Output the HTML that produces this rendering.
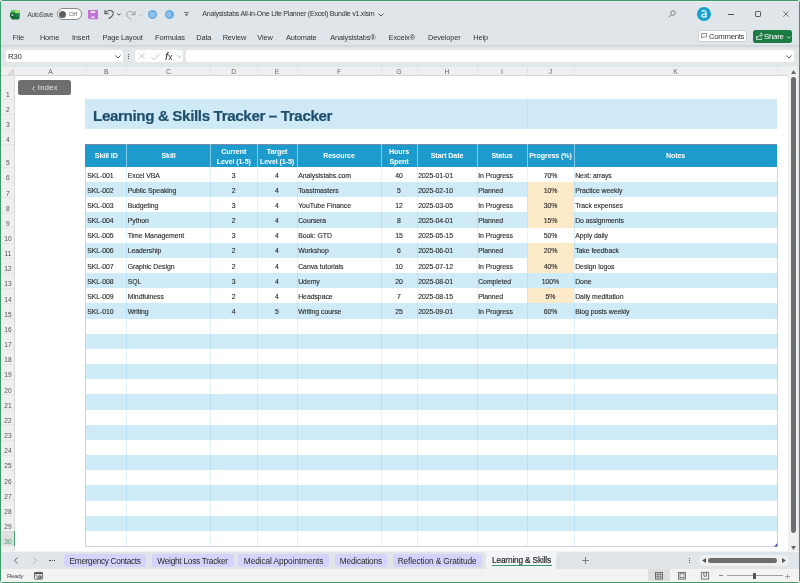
<!DOCTYPE html><html><head><meta charset="utf-8"><style>
*{margin:0;padding:0;box-sizing:border-box}
html,body{width:800px;height:583px;overflow:hidden;background:#e6e6e6}
body{will-change:transform;font-family:"Liberation Sans", sans-serif;position:relative;color:#262626}
.a{position:absolute;white-space:nowrap}
.t{position:absolute;white-space:nowrap;line-height:1}
svg{position:absolute;overflow:visible}
</style></head><body>

<div class="a" style="left:0;top:0;width:800px;height:583px;background:#dfe5e8;border:1.2px solid #3d9a6a;border-radius:3px"></div>
<div class="a" style="left:1.2px;top:1.2px;width:797.6px;height:1px;background:#eaeef1"></div>
<svg style="left:9.5px;top:9.6px" width="9.5" height="9.5" viewBox="0 0 10 10">
<path d="M2.2 0 H8.8 Q10 0 10 1.2 V8.8 Q10 10 8.8 10 H2.2 Q1.2 10 1.2 8.8 V1.2 Q1.2 0 2.2 0 Z" fill="#17733c"/>
<path d="M2.2 0 H8.8 Q10 0 10 1.2 V3.4 H1.2 V1.2 Q1.2 0 2.2 0 Z" fill="#5fcf5a"/>
<rect x="5.6" y="0" width="4.4" height="3.4" rx="0.6" fill="#a6e37c"/>
<rect x="5.6" y="3.4" width="4.4" height="3.3" fill="#22874a"/>
<rect x="0" y="2.6" width="5.2" height="5.2" rx="0.7" fill="#0f5e2e"/>
<path d="M1.6 3.9 L3.6 6.5 M3.6 3.9 L1.6 6.5" stroke="#fff" stroke-width="0.75"/>
</svg>
<div class="t" style="left:27.6px;top:11.8px;font-size:6.5px;color:#4a4a4a;text-align:left;font-weight:normal;letter-spacing:-0.35px">AutoSave</div>
<div class="a" style="left:56.5px;top:8.3px;width:25px;height:12px;background:#fff;border:0.8px solid #8a8a8a;border-radius:6px"></div>
<div class="a" style="left:58.8px;top:10.6px;width:7.4px;height:7.4px;border-radius:50%;background:#5f5f5f"></div>
<div class="t" style="left:69px;top:11.4px;font-size:6.2px;color:#666;text-align:left;font-weight:normal;">Off</div>
<svg style="left:88px;top:9.6px" width="10" height="9.2" viewBox="0 0 10 9.2">
<path d="M0.8 0 H9.2 Q10 0 10 0.8 V8.4 Q10 9.2 9.2 9.2 H1.2 L0 8 V0.8 Q0 0 0.8 0 Z" fill="#c172d3"/>
<rect x="2.6" y="1.2" width="4.6" height="1.8" rx="0.4" fill="#fbf2fc"/>
<rect x="3.2" y="6.6" width="3.4" height="1.6" rx="0.4" fill="#f4e4f7"/>
</svg>
<svg style="left:104px;top:9px" width="10" height="10" viewBox="0 0 10 10">
<path d="M1 1 L1 4.8 L4.8 4.8" fill="none" stroke="#555" stroke-width="1.1"/>
<path d="M1.3 4.5 C2.8 1.2 8 0.2 9.2 3.6 C9.9 5.8 7 8.2 4.6 9.8" fill="none" stroke="#555" stroke-width="1.05"/>
</svg>
<svg style="left:116.5px;top:13.2px" width="4" height="3" viewBox="0 0 4 3"><path d="M0.3 0.5 L2 2.2 L3.7 0.5" fill="none" stroke="#444" stroke-width="0.9"/></svg>
<svg style="left:126px;top:9.5px" width="10" height="10" viewBox="0 0 10 10">
<path d="M9 1 L9 4.8 L5.2 4.8" fill="none" stroke="#9a9a9a" stroke-width="1.0"/>
<path d="M8.7 4.5 C7.2 1.2 2 0.2 0.8 3.6 C0.1 5.8 3 8.2 5.4 9.8" fill="none" stroke="#9a9a9a" stroke-width="0.95"/>
</svg>
<svg style="left:138.5px;top:13.5px" width="4" height="3" viewBox="0 0 4 3"><path d="M0.3 0.5 L2 2.2 L3.7 0.5" fill="none" stroke="#bbb" stroke-width="0.8"/></svg>
<div class="a" style="left:148.0px;top:9.9px;width:9px;height:9px;border-radius:50%;background:#6aaee6"></div>
<div class="a" style="left:150.1px;top:12px;width:4.8px;height:4.8px;border-radius:1.2px;background:#8fc2ee"></div>
<div class="a" style="left:164.5px;top:9.9px;width:9px;height:9px;border-radius:50%;background:#6aaee6"></div>
<div class="a" style="left:166.6px;top:12px;width:4.8px;height:4.8px;border-radius:1.2px;background:#8fc2ee"></div>
<svg style="left:183.5px;top:11.8px" width="5" height="5" viewBox="0 0 5 5"><path d="M0.3 0.6 H4.7" stroke="#444" stroke-width="0.8"/><path d="M0.8 2.2 L2.5 4 L4.2 2.2 Z" fill="#444"/></svg>
<div class="t" style="left:202.3px;top:11.0px;font-size:7.1px;color:#333;text-align:left;font-weight:normal;letter-spacing:-0.25px">Analysistabs All-in-One Life Planner (Excel) Bundle v1.xlsm</div>
<svg style="left:377.5px;top:12.8px" width="6" height="4" viewBox="0 0 6 4"><path d="M0.5 0.6 L3 3 L5.5 0.6" fill="none" stroke="#444" stroke-width="0.9"/></svg>
<svg style="left:667.5px;top:10px" width="8" height="8" viewBox="0 0 8 8"><circle cx="5" cy="3" r="2.3" fill="none" stroke="#666" stroke-width="0.75"/><path d="M3.3 4.7 L0.8 7.2" stroke="#666" stroke-width="0.85"/></svg>
<div class="a" style="left:697px;top:7px;width:14.2px;height:14.2px;border-radius:50%;background:#18a0cf"></div>
<svg style="left:697px;top:7px" width="14.2" height="14.2" viewBox="0 0 14 14"><path d="M4.6 4.4 C5.6 3.3 8.6 3.3 8.9 5.2 L8.9 10.3 M8.9 6.9 C6.5 6.6 4.5 7.2 4.6 8.7 C4.7 10.4 7.6 10.3 8.9 8.8" fill="none" stroke="#fff" stroke-width="1.2"/></svg>
<div class="a" style="left:728px;top:13.7px;width:6px;height:0.75px;background:#555;"></div>
<div class="a" style="left:755.2px;top:11px;width:6px;height:6px;background:transparent;border:0.75px solid #555;border-radius:1.2px"></div>
<svg style="left:782.5px;top:11px" width="6" height="6" viewBox="0 0 6 6"><path d="M0.3 0.3 L5.7 5.7 M5.7 0.3 L0.3 5.7" stroke="#555" stroke-width="0.75"/></svg>
<div class="t" style="left:9.5px;top:33.8px;width:17.5px;font-size:7.4px;color:#333;text-align:center;font-weight:normal;letter-spacing:-0.12px">File</div>
<div class="t" style="left:36.7px;top:33.8px;width:25.699999999999996px;font-size:7.4px;color:#333;text-align:center;font-weight:normal;letter-spacing:-0.12px">Home</div>
<div class="t" style="left:68.9px;top:33.8px;width:23.799999999999997px;font-size:7.4px;color:#333;text-align:center;font-weight:normal;letter-spacing:-0.12px">Insert</div>
<div class="t" style="left:99.5px;top:33.8px;width:46.0px;font-size:7.4px;color:#333;text-align:center;font-weight:normal;letter-spacing:-0.12px">Page Layout</div>
<div class="t" style="left:151.7px;top:33.8px;width:36.60000000000002px;font-size:7.4px;color:#333;text-align:center;font-weight:normal;letter-spacing:-0.12px">Formulas</div>
<div class="t" style="left:193px;top:33.8px;width:21.599999999999994px;font-size:7.4px;color:#333;text-align:center;font-weight:normal;letter-spacing:-0.12px">Data</div>
<div class="t" style="left:219.8px;top:33.8px;width:29.19999999999999px;font-size:7.4px;color:#333;text-align:center;font-weight:normal;letter-spacing:-0.12px">Review</div>
<div class="t" style="left:253.89999999999998px;top:33.8px;width:22.200000000000045px;font-size:7.4px;color:#333;text-align:center;font-weight:normal;letter-spacing:-0.12px">View</div>
<div class="t" style="left:281.5px;top:33.8px;width:39.5px;font-size:7.4px;color:#333;text-align:center;font-weight:normal;letter-spacing:-0.12px">Automate</div>
<div class="t" style="left:326.4px;top:33.8px;width:53.10000000000002px;font-size:7.4px;color:#333;text-align:center;font-weight:normal;letter-spacing:-0.12px">Analysistabs®</div>
<div class="t" style="left:385.8px;top:33.8px;width:32.0px;font-size:7.4px;color:#333;text-align:center;font-weight:normal;letter-spacing:-0.12px">Excelx®</div>
<div class="t" style="left:423.9px;top:33.8px;width:40.700000000000045px;font-size:7.4px;color:#333;text-align:center;font-weight:normal;letter-spacing:-0.12px">Developer</div>
<div class="t" style="left:469.7px;top:33.8px;width:21.900000000000034px;font-size:7.4px;color:#333;text-align:center;font-weight:normal;letter-spacing:-0.12px">Help</div>
<div class="a" style="left:697.7px;top:30.2px;width:49.8px;height:12px;background:#fff;border:0.6px solid #d0d0d0;border-radius:2px"></div>
<svg style="left:700.5px;top:33.3px" width="6" height="6" viewBox="0 0 7 7"><path d="M0.5 0.5 H6.5 V4.6 H2.6 L1 6.3 V4.6 H0.5 Z" fill="none" stroke="#444" stroke-width="0.7"/></svg>
<div class="t" style="left:709px;top:33.4px;font-size:7.8px;color:#333;text-align:left;font-weight:normal;letter-spacing:-0.33px">Comments</div>
<div class="a" style="left:752.7px;top:29.8px;width:39.4px;height:13.2px;background:#1b7b43;border-radius:2.5px"></div>
<svg style="left:755.5px;top:33px" width="7" height="7" viewBox="0 0 8 8"><path d="M0.6 3.4 V7.4 H6.4 V5.4 M1.6 6 C2 3.8 3.6 2.6 5.6 2.6 V4.2 L7.6 2 L5.6 -0.2 V1.4" fill="none" stroke="#fff" stroke-width="0.8"/></svg>
<div class="t" style="left:764px;top:33.2px;font-size:7.8px;color:#fff;text-align:left;font-weight:normal;letter-spacing:-0.22px">Share</div>
<svg style="left:786.5px;top:35.5px" width="4" height="3" viewBox="0 0 4 3"><path d="M0.3 0.5 L2 2.2 L3.7 0.5" fill="none" stroke="#fff" stroke-width="0.7"/></svg>
<div class="a" style="left:1.2px;top:45.3px;width:797.6px;height:21.2px;background:#e2e7ea;"></div>
<div class="a" style="left:1.2px;top:44.6px;width:797.6px;height:3px;background:linear-gradient(#cbd1d5,#d3d8dc 40%,#e2e7ea);"></div>
<div class="a" style="left:6px;top:49.8px;width:116.5px;height:12.6px;background:#fff;border-radius:2.5px"></div>
<div class="t" style="left:8px;top:52.6px;font-size:7.9px;color:#333;text-align:left;font-weight:normal;letter-spacing:-0.35px">R30</div>
<svg style="left:114.5px;top:55px" width="6" height="4" viewBox="0 0 6 4"><path d="M0.4 0.5 L3 3 L5.6 0.5" fill="none" stroke="#444" stroke-width="0.9"/></svg>
<div class="a" style="left:128.3px;top:53.7px;width:1.1px;height:1.1px;background:#555;"></div>
<div class="a" style="left:128.3px;top:56px;width:1.1px;height:1.1px;background:#555;"></div>
<div class="a" style="left:128.3px;top:58.3px;width:1.1px;height:1.1px;background:#555;"></div>
<div class="a" style="left:135px;top:49.8px;width:47.5px;height:12.6px;background:#fff;border-radius:2.5px"></div>
<svg style="left:139px;top:53px" width="6" height="6" viewBox="0 0 6 6"><path d="M0.3 0.3 L5.7 5.7 M5.7 0.3 L0.3 5.7" stroke="#aaa" stroke-width="0.6"/></svg>
<svg style="left:151px;top:53.5px" width="9" height="6" viewBox="0 0 9 6"><path d="M0.3 3.2 L3 5.7 L8.7 0.3" fill="none" stroke="#aaa" stroke-width="0.6"/></svg>
<div class="t" style="left:165px;top:50.6px;font-size:11.5px;color:#333;text-align:left;font-weight:normal;font-family:"Liberation Serif",serif;font-style:italic;letter-spacing:-0.6px"><i>f</i><span style="font-size:8.5px">x</span></div>
<svg style="left:176.5px;top:55.2px" width="5" height="3" viewBox="0 0 5 3"><path d="M0.3 0.4 L2.5 2.6 L4.7 0.4" fill="none" stroke="#999" stroke-width="0.6"/></svg>
<div class="a" style="left:186px;top:49.8px;width:608px;height:12.6px;background:#fff;border-radius:2.5px"></div>
<svg style="left:786px;top:54.5px" width="6" height="4" viewBox="0 0 6 4"><path d="M0.4 0.5 L3 3 L5.6 0.5" fill="none" stroke="#444" stroke-width="0.8"/></svg>
<div class="a" style="left:1.2px;top:66.8px;width:787px;height:9.2px;background:#efefef;border-bottom:0.8px solid #d9d9d9"></div>
<svg style="left:7px;top:68px" width="7" height="7" viewBox="0 0 7 7"><path d="M7 0 L7 7 L0 7 Z" fill="#d8d8d8"/></svg>
<div class="t" style="left:15px;top:69.0px;width:71px;font-size:6.8px;color:#666;text-align:center;font-weight:normal;">A</div>
<div class="a" style="left:85.6px;top:67.5px;width:0.8px;height:8px;background:#e2e2e2;"></div>
<div class="t" style="left:86px;top:69.0px;width:40.5px;font-size:6.8px;color:#666;text-align:center;font-weight:normal;">B</div>
<div class="a" style="left:126.1px;top:67.5px;width:0.8px;height:8px;background:#e2e2e2;"></div>
<div class="t" style="left:126.5px;top:69.0px;width:84.0px;font-size:6.8px;color:#666;text-align:center;font-weight:normal;">C</div>
<div class="a" style="left:210.1px;top:67.5px;width:0.8px;height:8px;background:#e2e2e2;"></div>
<div class="t" style="left:210.5px;top:69.0px;width:46.5px;font-size:6.8px;color:#666;text-align:center;font-weight:normal;">D</div>
<div class="a" style="left:256.6px;top:67.5px;width:0.8px;height:8px;background:#e2e2e2;"></div>
<div class="t" style="left:257px;top:69.0px;width:40px;font-size:6.8px;color:#666;text-align:center;font-weight:normal;">E</div>
<div class="a" style="left:296.6px;top:67.5px;width:0.8px;height:8px;background:#e2e2e2;"></div>
<div class="t" style="left:297px;top:69.0px;width:84px;font-size:6.8px;color:#666;text-align:center;font-weight:normal;">F</div>
<div class="a" style="left:380.6px;top:67.5px;width:0.8px;height:8px;background:#e2e2e2;"></div>
<div class="t" style="left:381px;top:69.0px;width:36px;font-size:6.8px;color:#666;text-align:center;font-weight:normal;">G</div>
<div class="a" style="left:416.6px;top:67.5px;width:0.8px;height:8px;background:#e2e2e2;"></div>
<div class="t" style="left:417px;top:69.0px;width:60px;font-size:6.8px;color:#666;text-align:center;font-weight:normal;">H</div>
<div class="a" style="left:476.6px;top:67.5px;width:0.8px;height:8px;background:#e2e2e2;"></div>
<div class="t" style="left:477px;top:69.0px;width:50px;font-size:6.8px;color:#666;text-align:center;font-weight:normal;">I</div>
<div class="a" style="left:526.6px;top:67.5px;width:0.8px;height:8px;background:#e2e2e2;"></div>
<div class="t" style="left:527px;top:69.0px;width:47px;font-size:6.8px;color:#666;text-align:center;font-weight:normal;">J</div>
<div class="a" style="left:573.6px;top:67.5px;width:0.8px;height:8px;background:#e2e2e2;"></div>
<div class="t" style="left:574px;top:69.0px;width:203px;font-size:6.8px;color:#666;text-align:center;font-weight:normal;">K</div>
<div class="a" style="left:776.6px;top:67.5px;width:0.8px;height:8px;background:#e2e2e2;"></div>
<div class="a" style="left:15px;top:76px;width:773px;height:475.5px;background:#fff;"></div>
<div class="a" style="left:1.2px;top:76px;width:13.8px;height:475.5px;background:#efefef;border-right:0.8px solid #d9d9d9"></div>
<div class="t" style="left:1.2px;top:92.2px;width:13.5px;font-size:6.6px;color:#555;text-align:center;font-weight:normal;">1</div>
<div class="a" style="left:1.2px;top:98.7px;width:13px;height:0.6px;background:#e6e6e6;"></div>
<div class="t" style="left:1.2px;top:107.2px;width:13.5px;font-size:6.6px;color:#555;text-align:center;font-weight:normal;">2</div>
<div class="a" style="left:1.2px;top:113.7px;width:13px;height:0.6px;background:#e6e6e6;"></div>
<div class="t" style="left:1.2px;top:122.2px;width:13.5px;font-size:6.6px;color:#555;text-align:center;font-weight:normal;">3</div>
<div class="a" style="left:1.2px;top:128.7px;width:13px;height:0.6px;background:#e6e6e6;"></div>
<div class="t" style="left:1.2px;top:137.2px;width:13.5px;font-size:6.6px;color:#555;text-align:center;font-weight:normal;">4</div>
<div class="a" style="left:1.2px;top:143.7px;width:13px;height:0.6px;background:#e6e6e6;"></div>
<div class="t" style="left:1.2px;top:160.2px;width:13.5px;font-size:6.6px;color:#555;text-align:center;font-weight:normal;">5</div>
<div class="a" style="left:1.2px;top:166.7px;width:13px;height:0.6px;background:#e6e6e6;"></div>
<div class="t" style="left:1.2px;top:175.35999999999999px;width:13.5px;font-size:6.6px;color:#555;text-align:center;font-weight:normal;">6</div>
<div class="a" style="left:1.2px;top:181.85999999999999px;width:13px;height:0.6px;background:#e6e6e6;"></div>
<div class="t" style="left:1.2px;top:190.51999999999998px;width:13.5px;font-size:6.6px;color:#555;text-align:center;font-weight:normal;">7</div>
<div class="a" style="left:1.2px;top:197.01999999999998px;width:13px;height:0.6px;background:#e6e6e6;"></div>
<div class="t" style="left:1.2px;top:205.67999999999998px;width:13.5px;font-size:6.6px;color:#555;text-align:center;font-weight:normal;">8</div>
<div class="a" style="left:1.2px;top:212.17999999999998px;width:13px;height:0.6px;background:#e6e6e6;"></div>
<div class="t" style="left:1.2px;top:220.83999999999997px;width:13.5px;font-size:6.6px;color:#555;text-align:center;font-weight:normal;">9</div>
<div class="a" style="left:1.2px;top:227.33999999999997px;width:13px;height:0.6px;background:#e6e6e6;"></div>
<div class="t" style="left:1.2px;top:236.0px;width:13.5px;font-size:6.6px;color:#555;text-align:center;font-weight:normal;">10</div>
<div class="a" style="left:1.2px;top:242.5px;width:13px;height:0.6px;background:#e6e6e6;"></div>
<div class="t" style="left:1.2px;top:251.15999999999997px;width:13.5px;font-size:6.6px;color:#555;text-align:center;font-weight:normal;">11</div>
<div class="a" style="left:1.2px;top:257.65999999999997px;width:13px;height:0.6px;background:#e6e6e6;"></div>
<div class="t" style="left:1.2px;top:266.32px;width:13.5px;font-size:6.6px;color:#555;text-align:center;font-weight:normal;">12</div>
<div class="a" style="left:1.2px;top:272.82px;width:13px;height:0.6px;background:#e6e6e6;"></div>
<div class="t" style="left:1.2px;top:281.47999999999996px;width:13.5px;font-size:6.6px;color:#555;text-align:center;font-weight:normal;">13</div>
<div class="a" style="left:1.2px;top:287.97999999999996px;width:13px;height:0.6px;background:#e6e6e6;"></div>
<div class="t" style="left:1.2px;top:296.64px;width:13.5px;font-size:6.6px;color:#555;text-align:center;font-weight:normal;">14</div>
<div class="a" style="left:1.2px;top:303.14px;width:13px;height:0.6px;background:#e6e6e6;"></div>
<div class="t" style="left:1.2px;top:311.8px;width:13.5px;font-size:6.6px;color:#555;text-align:center;font-weight:normal;">15</div>
<div class="a" style="left:1.2px;top:318.3px;width:13px;height:0.6px;background:#e6e6e6;"></div>
<div class="t" style="left:1.2px;top:326.96px;width:13.5px;font-size:6.6px;color:#555;text-align:center;font-weight:normal;">16</div>
<div class="a" style="left:1.2px;top:333.46px;width:13px;height:0.6px;background:#e6e6e6;"></div>
<div class="t" style="left:1.2px;top:342.12px;width:13.5px;font-size:6.6px;color:#555;text-align:center;font-weight:normal;">17</div>
<div class="a" style="left:1.2px;top:348.62px;width:13px;height:0.6px;background:#e6e6e6;"></div>
<div class="t" style="left:1.2px;top:357.28px;width:13.5px;font-size:6.6px;color:#555;text-align:center;font-weight:normal;">18</div>
<div class="a" style="left:1.2px;top:363.78px;width:13px;height:0.6px;background:#e6e6e6;"></div>
<div class="t" style="left:1.2px;top:372.44px;width:13.5px;font-size:6.6px;color:#555;text-align:center;font-weight:normal;">19</div>
<div class="a" style="left:1.2px;top:378.94px;width:13px;height:0.6px;background:#e6e6e6;"></div>
<div class="t" style="left:1.2px;top:387.59999999999997px;width:13.5px;font-size:6.6px;color:#555;text-align:center;font-weight:normal;">20</div>
<div class="a" style="left:1.2px;top:394.09999999999997px;width:13px;height:0.6px;background:#e6e6e6;"></div>
<div class="t" style="left:1.2px;top:402.76px;width:13.5px;font-size:6.6px;color:#555;text-align:center;font-weight:normal;">21</div>
<div class="a" style="left:1.2px;top:409.26px;width:13px;height:0.6px;background:#e6e6e6;"></div>
<div class="t" style="left:1.2px;top:417.92px;width:13.5px;font-size:6.6px;color:#555;text-align:center;font-weight:normal;">22</div>
<div class="a" style="left:1.2px;top:424.42px;width:13px;height:0.6px;background:#e6e6e6;"></div>
<div class="t" style="left:1.2px;top:433.08px;width:13.5px;font-size:6.6px;color:#555;text-align:center;font-weight:normal;">23</div>
<div class="a" style="left:1.2px;top:439.58px;width:13px;height:0.6px;background:#e6e6e6;"></div>
<div class="t" style="left:1.2px;top:448.24px;width:13.5px;font-size:6.6px;color:#555;text-align:center;font-weight:normal;">24</div>
<div class="a" style="left:1.2px;top:454.74px;width:13px;height:0.6px;background:#e6e6e6;"></div>
<div class="t" style="left:1.2px;top:463.4px;width:13.5px;font-size:6.6px;color:#555;text-align:center;font-weight:normal;">25</div>
<div class="a" style="left:1.2px;top:469.9px;width:13px;height:0.6px;background:#e6e6e6;"></div>
<div class="t" style="left:1.2px;top:478.56px;width:13.5px;font-size:6.6px;color:#555;text-align:center;font-weight:normal;">26</div>
<div class="a" style="left:1.2px;top:485.06px;width:13px;height:0.6px;background:#e6e6e6;"></div>
<div class="t" style="left:1.2px;top:493.71999999999997px;width:13.5px;font-size:6.6px;color:#555;text-align:center;font-weight:normal;">27</div>
<div class="a" style="left:1.2px;top:500.21999999999997px;width:13px;height:0.6px;background:#e6e6e6;"></div>
<div class="t" style="left:1.2px;top:508.87999999999994px;width:13.5px;font-size:6.6px;color:#555;text-align:center;font-weight:normal;">28</div>
<div class="a" style="left:1.2px;top:515.38px;width:13px;height:0.6px;background:#e6e6e6;"></div>
<div class="t" style="left:1.2px;top:524.0400000000001px;width:13.5px;font-size:6.6px;color:#555;text-align:center;font-weight:normal;">29</div>
<div class="a" style="left:1.2px;top:530.5400000000001px;width:13px;height:0.6px;background:#e6e6e6;"></div>
<div class="a" style="left:1.2px;top:530.84px;width:13.8px;height:15.159999999999968px;background:#dfdfdf;border-right:1.3px solid #45a06e"></div>
<div class="t" style="left:1.2px;top:539.2px;width:13.5px;font-size:6.6px;color:#3f9a68;text-align:center;font-weight:normal;">30</div>
<div class="a" style="left:18px;top:79.8px;width:53px;height:15px;background:#6e6e6e;border-radius:2.5px"></div>
<svg style="left:32px;top:85.6px" width="3" height="5" viewBox="0 0 3 5"><path d="M2.6 0.4 L0.5 2.5 L2.6 4.6" fill="none" stroke="#eee" stroke-width="0.9"/></svg>
<div class="t" style="left:37.8px;top:84.4px;font-size:7.5px;color:#ececec;text-align:left;font-weight:normal;letter-spacing:0.35px">Index</div>
<div class="a" style="left:85px;top:99px;width:692px;height:29.9px;background:#cfeaf6;"></div>
<div class="a" style="left:526.6px;top:99px;width:0.8px;height:29.9px;background:#c2e3f2;"></div>
<div class="t" style="left:93px;top:107.5px;font-size:15.2px;color:#1e4f6c;text-align:left;font-weight:bold;letter-spacing:-0.38px;-webkit-text-stroke:0.2px #1e4f6c">Learning &amp; Skills Tracker – Tracker</div>
<div class="a" style="left:85px;top:144px;width:692px;height:22.8px;background:#1e9bcd;border-top:0.6px solid #7a8aa8"></div>
<div class="t" style="left:86px;top:153.4px;width:40.5px;font-size:7.1px;color:#fff;text-align:center;font-weight:bold;line-height:7px;letter-spacing:-0.1px">Skill ID</div>
<div class="a" style="left:126.1px;top:144px;width:0.8px;height:22.8px;background:#86cbe8;"></div>
<div class="t" style="left:126.5px;top:153.4px;width:84.0px;font-size:7.1px;color:#fff;text-align:center;font-weight:bold;line-height:7px;letter-spacing:-0.1px">Skill</div>
<div class="a" style="left:210.1px;top:144px;width:0.8px;height:22.8px;background:#86cbe8;"></div>
<div class="t" style="left:210.5px;top:146.5px;width:46.5px;font-size:7.1px;color:#fff;text-align:center;font-weight:bold;line-height:10.5px;letter-spacing:-0.1px">Current<br>Level (1-5)</div>
<div class="a" style="left:256.6px;top:144px;width:0.8px;height:22.8px;background:#86cbe8;"></div>
<div class="t" style="left:257px;top:146.5px;width:40px;font-size:7.1px;color:#fff;text-align:center;font-weight:bold;line-height:10.5px;letter-spacing:-0.1px">Target<br>Level (1-5)</div>
<div class="a" style="left:296.6px;top:144px;width:0.8px;height:22.8px;background:#86cbe8;"></div>
<div class="t" style="left:297px;top:153.4px;width:84px;font-size:7.1px;color:#fff;text-align:center;font-weight:bold;line-height:7px;letter-spacing:-0.1px">Resource</div>
<div class="a" style="left:380.6px;top:144px;width:0.8px;height:22.8px;background:#86cbe8;"></div>
<div class="t" style="left:381px;top:146.5px;width:36px;font-size:7.1px;color:#fff;text-align:center;font-weight:bold;line-height:10.5px;letter-spacing:-0.1px">Hours<br>Spent</div>
<div class="a" style="left:416.6px;top:144px;width:0.8px;height:22.8px;background:#86cbe8;"></div>
<div class="t" style="left:417px;top:153.4px;width:60px;font-size:7.1px;color:#fff;text-align:center;font-weight:bold;line-height:7px;letter-spacing:-0.1px">Start Date</div>
<div class="a" style="left:476.6px;top:144px;width:0.8px;height:22.8px;background:#86cbe8;"></div>
<div class="t" style="left:477px;top:153.4px;width:50px;font-size:7.1px;color:#fff;text-align:center;font-weight:bold;line-height:7px;letter-spacing:-0.1px">Status</div>
<div class="a" style="left:526.6px;top:144px;width:0.8px;height:22.8px;background:#86cbe8;"></div>
<div class="t" style="left:527px;top:153.4px;width:47px;font-size:7.1px;color:#fff;text-align:center;font-weight:bold;line-height:7px;letter-spacing:-0.1px">Progress (%)</div>
<div class="a" style="left:573.6px;top:144px;width:0.8px;height:22.8px;background:#86cbe8;"></div>
<div class="t" style="left:574px;top:153.4px;width:203px;font-size:7.1px;color:#fff;text-align:center;font-weight:bold;line-height:7px;letter-spacing:-0.1px">Notes</div>
<div class="a" style="left:85px;top:182.16px;width:692px;height:15.159999999999997px;background:#cfebf7;"></div>
<div class="a" style="left:527px;top:182.16px;width:47px;height:15.159999999999997px;background:#fdeac8;"></div>
<div class="a" style="left:527px;top:197.32px;width:47px;height:15.159999999999997px;background:#fdeac8;"></div>
<div class="a" style="left:85px;top:212.48px;width:692px;height:15.159999999999997px;background:#cfebf7;"></div>
<div class="a" style="left:527px;top:212.48px;width:47px;height:15.159999999999997px;background:#fdeac8;"></div>
<div class="a" style="left:85px;top:242.8px;width:692px;height:15.159999999999968px;background:#cfebf7;"></div>
<div class="a" style="left:527px;top:242.8px;width:47px;height:15.159999999999968px;background:#fdeac8;"></div>
<div class="a" style="left:527px;top:257.96px;width:47px;height:15.160000000000025px;background:#fdeac8;"></div>
<div class="a" style="left:85px;top:273.12px;width:692px;height:15.159999999999968px;background:#cfebf7;"></div>
<div class="a" style="left:527px;top:288.28px;width:47px;height:15.160000000000025px;background:#fdeac8;"></div>
<div class="a" style="left:85px;top:303.44px;width:692px;height:15.160000000000025px;background:#cfebf7;"></div>
<div class="a" style="left:85px;top:333.76px;width:692px;height:15.160000000000025px;background:#cfebf7;"></div>
<div class="a" style="left:85px;top:364.08px;width:692px;height:15.160000000000025px;background:#cfebf7;"></div>
<div class="a" style="left:85px;top:394.4px;width:692px;height:15.160000000000025px;background:#cfebf7;"></div>
<div class="a" style="left:85px;top:424.72px;width:692px;height:15.159999999999968px;background:#cfebf7;"></div>
<div class="a" style="left:85px;top:455.04px;width:692px;height:15.159999999999968px;background:#cfebf7;"></div>
<div class="a" style="left:85px;top:485.36px;width:692px;height:15.159999999999968px;background:#cfebf7;"></div>
<div class="a" style="left:85px;top:515.68px;width:692px;height:15.160000000000082px;background:#cfebf7;"></div>
<div class="a" style="left:126.0px;top:167px;width:1px;height:379.0px;background:rgba(70,170,220,0.15);"></div>
<div class="a" style="left:210.0px;top:167px;width:1px;height:379.0px;background:rgba(70,170,220,0.15);"></div>
<div class="a" style="left:256.5px;top:167px;width:1px;height:379.0px;background:rgba(70,170,220,0.15);"></div>
<div class="a" style="left:296.5px;top:167px;width:1px;height:379.0px;background:rgba(70,170,220,0.15);"></div>
<div class="a" style="left:380.5px;top:167px;width:1px;height:379.0px;background:rgba(70,170,220,0.15);"></div>
<div class="a" style="left:416.5px;top:167px;width:1px;height:379.0px;background:rgba(70,170,220,0.15);"></div>
<div class="a" style="left:476.5px;top:167px;width:1px;height:379.0px;background:rgba(70,170,220,0.15);"></div>
<div class="a" style="left:526.5px;top:167px;width:1px;height:379.0px;background:rgba(70,170,220,0.15);"></div>
<div class="a" style="left:573.5px;top:167px;width:1px;height:379.0px;background:rgba(70,170,220,0.15);"></div>
<div class="a" style="left:85px;top:166.8px;width:692.6px;height:379.8px;border:0.8px solid #cdd3e2;border-top:none"></div>
<svg style="left:774px;top:543.0px" width="3.5" height="3.5" viewBox="0 0 4 4"><path d="M4 0 L4 4 L0 4 Z" fill="#3b5bbf"/></svg>
<div class="t" style="left:87.2px;top:172.6px;width:38.1px;font-size:6.9px;color:#2b2b2b;text-align:left;font-weight:normal;letter-spacing:-0.05px;-webkit-text-stroke:0.12px #2b2b2b">SKL-001</div>
<div class="t" style="left:127.7px;top:172.6px;width:81.6px;font-size:6.9px;color:#2b2b2b;text-align:left;font-weight:normal;letter-spacing:-0.05px;-webkit-text-stroke:0.12px #2b2b2b">Excel VBA</div>
<div class="t" style="left:211.7px;top:172.6px;width:44.1px;font-size:6.9px;color:#2b2b2b;text-align:center;font-weight:normal;letter-spacing:-0.05px;-webkit-text-stroke:0.12px #2b2b2b">3</div>
<div class="t" style="left:258.2px;top:172.6px;width:37.6px;font-size:6.9px;color:#2b2b2b;text-align:center;font-weight:normal;letter-spacing:-0.05px;-webkit-text-stroke:0.12px #2b2b2b">4</div>
<div class="t" style="left:298.2px;top:172.6px;width:81.6px;font-size:6.9px;color:#2b2b2b;text-align:left;font-weight:normal;letter-spacing:-0.05px;-webkit-text-stroke:0.12px #2b2b2b">Analysistabs.com</div>
<div class="t" style="left:382.2px;top:172.6px;width:33.6px;font-size:6.9px;color:#2b2b2b;text-align:center;font-weight:normal;letter-spacing:-0.05px;-webkit-text-stroke:0.12px #2b2b2b">40</div>
<div class="t" style="left:418.2px;top:172.6px;width:57.6px;font-size:6.9px;color:#2b2b2b;text-align:left;font-weight:normal;letter-spacing:-0.05px;-webkit-text-stroke:0.12px #2b2b2b">2025-01-01</div>
<div class="t" style="left:478.2px;top:172.6px;width:47.6px;font-size:6.9px;color:#2b2b2b;text-align:left;font-weight:normal;letter-spacing:-0.05px;-webkit-text-stroke:0.12px #2b2b2b">In Progress</div>
<div class="t" style="left:528.2px;top:172.6px;width:44.6px;font-size:6.9px;color:#2b2b2b;text-align:center;font-weight:normal;letter-spacing:-0.05px;-webkit-text-stroke:0.12px #2b2b2b">70%</div>
<div class="t" style="left:575.2px;top:172.6px;width:200.6px;font-size:6.9px;color:#2b2b2b;text-align:left;font-weight:normal;letter-spacing:-0.05px;-webkit-text-stroke:0.12px #2b2b2b">Next: arrays</div>
<div class="t" style="left:87.2px;top:187.76px;width:38.1px;font-size:6.9px;color:#2b2b2b;text-align:left;font-weight:normal;letter-spacing:-0.05px;-webkit-text-stroke:0.12px #2b2b2b">SKL-002</div>
<div class="t" style="left:127.7px;top:187.76px;width:81.6px;font-size:6.9px;color:#2b2b2b;text-align:left;font-weight:normal;letter-spacing:-0.05px;-webkit-text-stroke:0.12px #2b2b2b">Public Speaking</div>
<div class="t" style="left:211.7px;top:187.76px;width:44.1px;font-size:6.9px;color:#2b2b2b;text-align:center;font-weight:normal;letter-spacing:-0.05px;-webkit-text-stroke:0.12px #2b2b2b">2</div>
<div class="t" style="left:258.2px;top:187.76px;width:37.6px;font-size:6.9px;color:#2b2b2b;text-align:center;font-weight:normal;letter-spacing:-0.05px;-webkit-text-stroke:0.12px #2b2b2b">4</div>
<div class="t" style="left:298.2px;top:187.76px;width:81.6px;font-size:6.9px;color:#2b2b2b;text-align:left;font-weight:normal;letter-spacing:-0.05px;-webkit-text-stroke:0.12px #2b2b2b">Toastmasters</div>
<div class="t" style="left:382.2px;top:187.76px;width:33.6px;font-size:6.9px;color:#2b2b2b;text-align:center;font-weight:normal;letter-spacing:-0.05px;-webkit-text-stroke:0.12px #2b2b2b">5</div>
<div class="t" style="left:418.2px;top:187.76px;width:57.6px;font-size:6.9px;color:#2b2b2b;text-align:left;font-weight:normal;letter-spacing:-0.05px;-webkit-text-stroke:0.12px #2b2b2b">2025-02-10</div>
<div class="t" style="left:478.2px;top:187.76px;width:47.6px;font-size:6.9px;color:#2b2b2b;text-align:left;font-weight:normal;letter-spacing:-0.05px;-webkit-text-stroke:0.12px #2b2b2b">Planned</div>
<div class="t" style="left:528.2px;top:187.76px;width:44.6px;font-size:6.9px;color:#2b2b2b;text-align:center;font-weight:normal;letter-spacing:-0.05px;-webkit-text-stroke:0.12px #2b2b2b">10%</div>
<div class="t" style="left:575.2px;top:187.76px;width:200.6px;font-size:6.9px;color:#2b2b2b;text-align:left;font-weight:normal;letter-spacing:-0.05px;-webkit-text-stroke:0.12px #2b2b2b">Practice weekly</div>
<div class="t" style="left:87.2px;top:202.92px;width:38.1px;font-size:6.9px;color:#2b2b2b;text-align:left;font-weight:normal;letter-spacing:-0.05px;-webkit-text-stroke:0.12px #2b2b2b">SKL-003</div>
<div class="t" style="left:127.7px;top:202.92px;width:81.6px;font-size:6.9px;color:#2b2b2b;text-align:left;font-weight:normal;letter-spacing:-0.05px;-webkit-text-stroke:0.12px #2b2b2b">Budgeting</div>
<div class="t" style="left:211.7px;top:202.92px;width:44.1px;font-size:6.9px;color:#2b2b2b;text-align:center;font-weight:normal;letter-spacing:-0.05px;-webkit-text-stroke:0.12px #2b2b2b">3</div>
<div class="t" style="left:258.2px;top:202.92px;width:37.6px;font-size:6.9px;color:#2b2b2b;text-align:center;font-weight:normal;letter-spacing:-0.05px;-webkit-text-stroke:0.12px #2b2b2b">4</div>
<div class="t" style="left:298.2px;top:202.92px;width:81.6px;font-size:6.9px;color:#2b2b2b;text-align:left;font-weight:normal;letter-spacing:-0.05px;-webkit-text-stroke:0.12px #2b2b2b">YouTube Finance</div>
<div class="t" style="left:382.2px;top:202.92px;width:33.6px;font-size:6.9px;color:#2b2b2b;text-align:center;font-weight:normal;letter-spacing:-0.05px;-webkit-text-stroke:0.12px #2b2b2b">12</div>
<div class="t" style="left:418.2px;top:202.92px;width:57.6px;font-size:6.9px;color:#2b2b2b;text-align:left;font-weight:normal;letter-spacing:-0.05px;-webkit-text-stroke:0.12px #2b2b2b">2025-03-05</div>
<div class="t" style="left:478.2px;top:202.92px;width:47.6px;font-size:6.9px;color:#2b2b2b;text-align:left;font-weight:normal;letter-spacing:-0.05px;-webkit-text-stroke:0.12px #2b2b2b">In Progress</div>
<div class="t" style="left:528.2px;top:202.92px;width:44.6px;font-size:6.9px;color:#2b2b2b;text-align:center;font-weight:normal;letter-spacing:-0.05px;-webkit-text-stroke:0.12px #2b2b2b">30%</div>
<div class="t" style="left:575.2px;top:202.92px;width:200.6px;font-size:6.9px;color:#2b2b2b;text-align:left;font-weight:normal;letter-spacing:-0.05px;-webkit-text-stroke:0.12px #2b2b2b">Track expenses</div>
<div class="t" style="left:87.2px;top:218.07999999999998px;width:38.1px;font-size:6.9px;color:#2b2b2b;text-align:left;font-weight:normal;letter-spacing:-0.05px;-webkit-text-stroke:0.12px #2b2b2b">SKL-004</div>
<div class="t" style="left:127.7px;top:218.07999999999998px;width:81.6px;font-size:6.9px;color:#2b2b2b;text-align:left;font-weight:normal;letter-spacing:-0.05px;-webkit-text-stroke:0.12px #2b2b2b">Python</div>
<div class="t" style="left:211.7px;top:218.07999999999998px;width:44.1px;font-size:6.9px;color:#2b2b2b;text-align:center;font-weight:normal;letter-spacing:-0.05px;-webkit-text-stroke:0.12px #2b2b2b">2</div>
<div class="t" style="left:258.2px;top:218.07999999999998px;width:37.6px;font-size:6.9px;color:#2b2b2b;text-align:center;font-weight:normal;letter-spacing:-0.05px;-webkit-text-stroke:0.12px #2b2b2b">4</div>
<div class="t" style="left:298.2px;top:218.07999999999998px;width:81.6px;font-size:6.9px;color:#2b2b2b;text-align:left;font-weight:normal;letter-spacing:-0.05px;-webkit-text-stroke:0.12px #2b2b2b">Coursera</div>
<div class="t" style="left:382.2px;top:218.07999999999998px;width:33.6px;font-size:6.9px;color:#2b2b2b;text-align:center;font-weight:normal;letter-spacing:-0.05px;-webkit-text-stroke:0.12px #2b2b2b">8</div>
<div class="t" style="left:418.2px;top:218.07999999999998px;width:57.6px;font-size:6.9px;color:#2b2b2b;text-align:left;font-weight:normal;letter-spacing:-0.05px;-webkit-text-stroke:0.12px #2b2b2b">2025-04-01</div>
<div class="t" style="left:478.2px;top:218.07999999999998px;width:47.6px;font-size:6.9px;color:#2b2b2b;text-align:left;font-weight:normal;letter-spacing:-0.05px;-webkit-text-stroke:0.12px #2b2b2b">Planned</div>
<div class="t" style="left:528.2px;top:218.07999999999998px;width:44.6px;font-size:6.9px;color:#2b2b2b;text-align:center;font-weight:normal;letter-spacing:-0.05px;-webkit-text-stroke:0.12px #2b2b2b">15%</div>
<div class="t" style="left:575.2px;top:218.07999999999998px;width:200.6px;font-size:6.9px;color:#2b2b2b;text-align:left;font-weight:normal;letter-spacing:-0.05px;-webkit-text-stroke:0.12px #2b2b2b">Do assignments</div>
<div class="t" style="left:87.2px;top:233.23999999999998px;width:38.1px;font-size:6.9px;color:#2b2b2b;text-align:left;font-weight:normal;letter-spacing:-0.05px;-webkit-text-stroke:0.12px #2b2b2b">SKL-005</div>
<div class="t" style="left:127.7px;top:233.23999999999998px;width:81.6px;font-size:6.9px;color:#2b2b2b;text-align:left;font-weight:normal;letter-spacing:-0.05px;-webkit-text-stroke:0.12px #2b2b2b">Time Management</div>
<div class="t" style="left:211.7px;top:233.23999999999998px;width:44.1px;font-size:6.9px;color:#2b2b2b;text-align:center;font-weight:normal;letter-spacing:-0.05px;-webkit-text-stroke:0.12px #2b2b2b">3</div>
<div class="t" style="left:258.2px;top:233.23999999999998px;width:37.6px;font-size:6.9px;color:#2b2b2b;text-align:center;font-weight:normal;letter-spacing:-0.05px;-webkit-text-stroke:0.12px #2b2b2b">4</div>
<div class="t" style="left:298.2px;top:233.23999999999998px;width:81.6px;font-size:6.9px;color:#2b2b2b;text-align:left;font-weight:normal;letter-spacing:-0.05px;-webkit-text-stroke:0.12px #2b2b2b">Book: GTD</div>
<div class="t" style="left:382.2px;top:233.23999999999998px;width:33.6px;font-size:6.9px;color:#2b2b2b;text-align:center;font-weight:normal;letter-spacing:-0.05px;-webkit-text-stroke:0.12px #2b2b2b">15</div>
<div class="t" style="left:418.2px;top:233.23999999999998px;width:57.6px;font-size:6.9px;color:#2b2b2b;text-align:left;font-weight:normal;letter-spacing:-0.05px;-webkit-text-stroke:0.12px #2b2b2b">2025-05-15</div>
<div class="t" style="left:478.2px;top:233.23999999999998px;width:47.6px;font-size:6.9px;color:#2b2b2b;text-align:left;font-weight:normal;letter-spacing:-0.05px;-webkit-text-stroke:0.12px #2b2b2b">In Progress</div>
<div class="t" style="left:528.2px;top:233.23999999999998px;width:44.6px;font-size:6.9px;color:#2b2b2b;text-align:center;font-weight:normal;letter-spacing:-0.05px;-webkit-text-stroke:0.12px #2b2b2b">50%</div>
<div class="t" style="left:575.2px;top:233.23999999999998px;width:200.6px;font-size:6.9px;color:#2b2b2b;text-align:left;font-weight:normal;letter-spacing:-0.05px;-webkit-text-stroke:0.12px #2b2b2b">Apply daily</div>
<div class="t" style="left:87.2px;top:248.4px;width:38.1px;font-size:6.9px;color:#2b2b2b;text-align:left;font-weight:normal;letter-spacing:-0.05px;-webkit-text-stroke:0.12px #2b2b2b">SKL-006</div>
<div class="t" style="left:127.7px;top:248.4px;width:81.6px;font-size:6.9px;color:#2b2b2b;text-align:left;font-weight:normal;letter-spacing:-0.05px;-webkit-text-stroke:0.12px #2b2b2b">Leadership</div>
<div class="t" style="left:211.7px;top:248.4px;width:44.1px;font-size:6.9px;color:#2b2b2b;text-align:center;font-weight:normal;letter-spacing:-0.05px;-webkit-text-stroke:0.12px #2b2b2b">2</div>
<div class="t" style="left:258.2px;top:248.4px;width:37.6px;font-size:6.9px;color:#2b2b2b;text-align:center;font-weight:normal;letter-spacing:-0.05px;-webkit-text-stroke:0.12px #2b2b2b">4</div>
<div class="t" style="left:298.2px;top:248.4px;width:81.6px;font-size:6.9px;color:#2b2b2b;text-align:left;font-weight:normal;letter-spacing:-0.05px;-webkit-text-stroke:0.12px #2b2b2b">Workshop</div>
<div class="t" style="left:382.2px;top:248.4px;width:33.6px;font-size:6.9px;color:#2b2b2b;text-align:center;font-weight:normal;letter-spacing:-0.05px;-webkit-text-stroke:0.12px #2b2b2b">6</div>
<div class="t" style="left:418.2px;top:248.4px;width:57.6px;font-size:6.9px;color:#2b2b2b;text-align:left;font-weight:normal;letter-spacing:-0.05px;-webkit-text-stroke:0.12px #2b2b2b">2025-06-01</div>
<div class="t" style="left:478.2px;top:248.4px;width:47.6px;font-size:6.9px;color:#2b2b2b;text-align:left;font-weight:normal;letter-spacing:-0.05px;-webkit-text-stroke:0.12px #2b2b2b">Planned</div>
<div class="t" style="left:528.2px;top:248.4px;width:44.6px;font-size:6.9px;color:#2b2b2b;text-align:center;font-weight:normal;letter-spacing:-0.05px;-webkit-text-stroke:0.12px #2b2b2b">20%</div>
<div class="t" style="left:575.2px;top:248.4px;width:200.6px;font-size:6.9px;color:#2b2b2b;text-align:left;font-weight:normal;letter-spacing:-0.05px;-webkit-text-stroke:0.12px #2b2b2b">Take feedback</div>
<div class="t" style="left:87.2px;top:263.56px;width:38.1px;font-size:6.9px;color:#2b2b2b;text-align:left;font-weight:normal;letter-spacing:-0.05px;-webkit-text-stroke:0.12px #2b2b2b">SKL-007</div>
<div class="t" style="left:127.7px;top:263.56px;width:81.6px;font-size:6.9px;color:#2b2b2b;text-align:left;font-weight:normal;letter-spacing:-0.05px;-webkit-text-stroke:0.12px #2b2b2b">Graphic Design</div>
<div class="t" style="left:211.7px;top:263.56px;width:44.1px;font-size:6.9px;color:#2b2b2b;text-align:center;font-weight:normal;letter-spacing:-0.05px;-webkit-text-stroke:0.12px #2b2b2b">2</div>
<div class="t" style="left:258.2px;top:263.56px;width:37.6px;font-size:6.9px;color:#2b2b2b;text-align:center;font-weight:normal;letter-spacing:-0.05px;-webkit-text-stroke:0.12px #2b2b2b">4</div>
<div class="t" style="left:298.2px;top:263.56px;width:81.6px;font-size:6.9px;color:#2b2b2b;text-align:left;font-weight:normal;letter-spacing:-0.05px;-webkit-text-stroke:0.12px #2b2b2b">Canva tutorials</div>
<div class="t" style="left:382.2px;top:263.56px;width:33.6px;font-size:6.9px;color:#2b2b2b;text-align:center;font-weight:normal;letter-spacing:-0.05px;-webkit-text-stroke:0.12px #2b2b2b">10</div>
<div class="t" style="left:418.2px;top:263.56px;width:57.6px;font-size:6.9px;color:#2b2b2b;text-align:left;font-weight:normal;letter-spacing:-0.05px;-webkit-text-stroke:0.12px #2b2b2b">2025-07-12</div>
<div class="t" style="left:478.2px;top:263.56px;width:47.6px;font-size:6.9px;color:#2b2b2b;text-align:left;font-weight:normal;letter-spacing:-0.05px;-webkit-text-stroke:0.12px #2b2b2b">In Progress</div>
<div class="t" style="left:528.2px;top:263.56px;width:44.6px;font-size:6.9px;color:#2b2b2b;text-align:center;font-weight:normal;letter-spacing:-0.05px;-webkit-text-stroke:0.12px #2b2b2b">40%</div>
<div class="t" style="left:575.2px;top:263.56px;width:200.6px;font-size:6.9px;color:#2b2b2b;text-align:left;font-weight:normal;letter-spacing:-0.05px;-webkit-text-stroke:0.12px #2b2b2b">Design logos</div>
<div class="t" style="left:87.2px;top:278.72px;width:38.1px;font-size:6.9px;color:#2b2b2b;text-align:left;font-weight:normal;letter-spacing:-0.05px;-webkit-text-stroke:0.12px #2b2b2b">SKL-008</div>
<div class="t" style="left:127.7px;top:278.72px;width:81.6px;font-size:6.9px;color:#2b2b2b;text-align:left;font-weight:normal;letter-spacing:-0.05px;-webkit-text-stroke:0.12px #2b2b2b">SQL</div>
<div class="t" style="left:211.7px;top:278.72px;width:44.1px;font-size:6.9px;color:#2b2b2b;text-align:center;font-weight:normal;letter-spacing:-0.05px;-webkit-text-stroke:0.12px #2b2b2b">3</div>
<div class="t" style="left:258.2px;top:278.72px;width:37.6px;font-size:6.9px;color:#2b2b2b;text-align:center;font-weight:normal;letter-spacing:-0.05px;-webkit-text-stroke:0.12px #2b2b2b">4</div>
<div class="t" style="left:298.2px;top:278.72px;width:81.6px;font-size:6.9px;color:#2b2b2b;text-align:left;font-weight:normal;letter-spacing:-0.05px;-webkit-text-stroke:0.12px #2b2b2b">Udemy</div>
<div class="t" style="left:382.2px;top:278.72px;width:33.6px;font-size:6.9px;color:#2b2b2b;text-align:center;font-weight:normal;letter-spacing:-0.05px;-webkit-text-stroke:0.12px #2b2b2b">20</div>
<div class="t" style="left:418.2px;top:278.72px;width:57.6px;font-size:6.9px;color:#2b2b2b;text-align:left;font-weight:normal;letter-spacing:-0.05px;-webkit-text-stroke:0.12px #2b2b2b">2025-08-01</div>
<div class="t" style="left:478.2px;top:278.72px;width:47.6px;font-size:6.9px;color:#2b2b2b;text-align:left;font-weight:normal;letter-spacing:-0.05px;-webkit-text-stroke:0.12px #2b2b2b">Completed</div>
<div class="t" style="left:528.2px;top:278.72px;width:44.6px;font-size:6.9px;color:#2b2b2b;text-align:center;font-weight:normal;letter-spacing:-0.05px;-webkit-text-stroke:0.12px #2b2b2b">100%</div>
<div class="t" style="left:575.2px;top:278.72px;width:200.6px;font-size:6.9px;color:#2b2b2b;text-align:left;font-weight:normal;letter-spacing:-0.05px;-webkit-text-stroke:0.12px #2b2b2b">Done</div>
<div class="t" style="left:87.2px;top:293.88px;width:38.1px;font-size:6.9px;color:#2b2b2b;text-align:left;font-weight:normal;letter-spacing:-0.05px;-webkit-text-stroke:0.12px #2b2b2b">SKL-009</div>
<div class="t" style="left:127.7px;top:293.88px;width:81.6px;font-size:6.9px;color:#2b2b2b;text-align:left;font-weight:normal;letter-spacing:-0.05px;-webkit-text-stroke:0.12px #2b2b2b">Mindfulness</div>
<div class="t" style="left:211.7px;top:293.88px;width:44.1px;font-size:6.9px;color:#2b2b2b;text-align:center;font-weight:normal;letter-spacing:-0.05px;-webkit-text-stroke:0.12px #2b2b2b">2</div>
<div class="t" style="left:258.2px;top:293.88px;width:37.6px;font-size:6.9px;color:#2b2b2b;text-align:center;font-weight:normal;letter-spacing:-0.05px;-webkit-text-stroke:0.12px #2b2b2b">4</div>
<div class="t" style="left:298.2px;top:293.88px;width:81.6px;font-size:6.9px;color:#2b2b2b;text-align:left;font-weight:normal;letter-spacing:-0.05px;-webkit-text-stroke:0.12px #2b2b2b">Headspace</div>
<div class="t" style="left:382.2px;top:293.88px;width:33.6px;font-size:6.9px;color:#2b2b2b;text-align:center;font-weight:normal;letter-spacing:-0.05px;-webkit-text-stroke:0.12px #2b2b2b">7</div>
<div class="t" style="left:418.2px;top:293.88px;width:57.6px;font-size:6.9px;color:#2b2b2b;text-align:left;font-weight:normal;letter-spacing:-0.05px;-webkit-text-stroke:0.12px #2b2b2b">2025-08-15</div>
<div class="t" style="left:478.2px;top:293.88px;width:47.6px;font-size:6.9px;color:#2b2b2b;text-align:left;font-weight:normal;letter-spacing:-0.05px;-webkit-text-stroke:0.12px #2b2b2b">Planned</div>
<div class="t" style="left:528.2px;top:293.88px;width:44.6px;font-size:6.9px;color:#2b2b2b;text-align:center;font-weight:normal;letter-spacing:-0.05px;-webkit-text-stroke:0.12px #2b2b2b">5%</div>
<div class="t" style="left:575.2px;top:293.88px;width:200.6px;font-size:6.9px;color:#2b2b2b;text-align:left;font-weight:normal;letter-spacing:-0.05px;-webkit-text-stroke:0.12px #2b2b2b">Daily meditation</div>
<div class="t" style="left:87.2px;top:309.04px;width:38.1px;font-size:6.9px;color:#2b2b2b;text-align:left;font-weight:normal;letter-spacing:-0.05px;-webkit-text-stroke:0.12px #2b2b2b">SKL-010</div>
<div class="t" style="left:127.7px;top:309.04px;width:81.6px;font-size:6.9px;color:#2b2b2b;text-align:left;font-weight:normal;letter-spacing:-0.05px;-webkit-text-stroke:0.12px #2b2b2b">Writing</div>
<div class="t" style="left:211.7px;top:309.04px;width:44.1px;font-size:6.9px;color:#2b2b2b;text-align:center;font-weight:normal;letter-spacing:-0.05px;-webkit-text-stroke:0.12px #2b2b2b">4</div>
<div class="t" style="left:258.2px;top:309.04px;width:37.6px;font-size:6.9px;color:#2b2b2b;text-align:center;font-weight:normal;letter-spacing:-0.05px;-webkit-text-stroke:0.12px #2b2b2b">5</div>
<div class="t" style="left:298.2px;top:309.04px;width:81.6px;font-size:6.9px;color:#2b2b2b;text-align:left;font-weight:normal;letter-spacing:-0.05px;-webkit-text-stroke:0.12px #2b2b2b">Writing course</div>
<div class="t" style="left:382.2px;top:309.04px;width:33.6px;font-size:6.9px;color:#2b2b2b;text-align:center;font-weight:normal;letter-spacing:-0.05px;-webkit-text-stroke:0.12px #2b2b2b">25</div>
<div class="t" style="left:418.2px;top:309.04px;width:57.6px;font-size:6.9px;color:#2b2b2b;text-align:left;font-weight:normal;letter-spacing:-0.05px;-webkit-text-stroke:0.12px #2b2b2b">2025-09-01</div>
<div class="t" style="left:478.2px;top:309.04px;width:47.6px;font-size:6.9px;color:#2b2b2b;text-align:left;font-weight:normal;letter-spacing:-0.05px;-webkit-text-stroke:0.12px #2b2b2b">In Progress</div>
<div class="t" style="left:528.2px;top:309.04px;width:44.6px;font-size:6.9px;color:#2b2b2b;text-align:center;font-weight:normal;letter-spacing:-0.05px;-webkit-text-stroke:0.12px #2b2b2b">60%</div>
<div class="t" style="left:575.2px;top:309.04px;width:200.6px;font-size:6.9px;color:#2b2b2b;text-align:left;font-weight:normal;letter-spacing:-0.05px;-webkit-text-stroke:0.12px #2b2b2b">Blog posts weekly</div>
<div class="a" style="left:788px;top:66px;width:10px;height:486px;background:#f0f0f0;border-radius:4px"></div>
<svg style="left:791px;top:70px" width="5" height="4" viewBox="0 0 5 4"><path d="M2.5 0 L5 4 L0 4 Z" fill="#666"/></svg>
<div class="a" style="left:791.2px;top:76.5px;width:4.8px;height:456.5px;background:#6e6e6e;border-radius:2.4px"></div>
<svg style="left:791px;top:545.5px" width="5" height="4" viewBox="0 0 5 4"><path d="M0 0 L5 0 L2.5 4 Z" fill="#666"/></svg>
<div class="a" style="left:1.2px;top:551px;width:797.6px;height:18.5px;background:#f3f4f7;"></div>
<div class="a" style="left:1.2px;top:551.5px;width:484.8px;height:18px;background:#dfe5e8;border-top-right-radius:4px"></div>
<div class="a" style="left:556px;top:551.5px;width:242.8px;height:18px;background:#dfe5e8;border-top-left-radius:4px"></div>
<div class="a" style="left:1.2px;top:569.2px;width:797.6px;height:12.6px;background:#f3f3f3;"></div>
<svg style="left:14px;top:557px" width="4" height="7" viewBox="0 0 4 7"><path d="M3.5 0.5 L0.6 3.5 L3.5 6.5" fill="none" stroke="#555" stroke-width="0.9"/></svg>
<svg style="left:32.5px;top:557px" width="4" height="7" viewBox="0 0 4 7"><path d="M0.5 0.5 L3.4 3.5 L0.5 6.5" fill="none" stroke="#aaa" stroke-width="0.9"/></svg>
<div class="a" style="left:49.3px;top:559.7px;width:1.4px;height:1.2px;background:#444;"></div>
<div class="a" style="left:51.5px;top:559.7px;width:1.4px;height:1.2px;background:#444;"></div>
<div class="a" style="left:53.7px;top:559.7px;width:1.4px;height:1.2px;background:#444;"></div>
<div class="a" style="left:63.9px;top:553.9px;width:82.5px;height:13.4px;background:#d5d2fb;border-radius:3px"></div>
<div class="t" style="left:69.6px;top:557.2px;font-size:8.3px;color:#2a2a2a;text-align:left;font-weight:normal;letter-spacing:-0.33px">Emergency Contacts</div>
<div class="a" style="left:151.5px;top:553.9px;width:82.1px;height:13.4px;background:#d5d2fb;border-radius:3px"></div>
<div class="t" style="left:157.3px;top:557.2px;font-size:8.3px;color:#2a2a2a;text-align:left;font-weight:normal;letter-spacing:-0.26px">Weight Loss Tracker</div>
<div class="a" style="left:238.3px;top:553.9px;width:91.0px;height:13.4px;background:#d5d2fb;border-radius:3px"></div>
<div class="t" style="left:243.8px;top:557.2px;font-size:8.3px;color:#2a2a2a;text-align:left;font-weight:normal;letter-spacing:-0.08px">Medical Appointments</div>
<div class="a" style="left:334.6px;top:553.9px;width:52.5px;height:13.4px;background:#d5d2fb;border-radius:3px"></div>
<div class="t" style="left:339.8px;top:557.2px;font-size:8.3px;color:#2a2a2a;text-align:left;font-weight:normal;letter-spacing:-0.2px">Medications</div>
<div class="a" style="left:392.5px;top:553.9px;width:89.69999999999999px;height:13.4px;background:#d5d2fb;border-radius:3px"></div>
<div class="t" style="left:397.7px;top:557.2px;font-size:8.3px;color:#2a2a2a;text-align:left;font-weight:normal;letter-spacing:-0.11px">Reflection &amp; Gratitude</div>
<div class="a" style="left:558.3px;top:555px;width:0.6px;height:11px;background:#d5dadd;"></div>
<div class="t" style="left:492px;top:555.6px;font-size:8.3px;color:#222;text-align:left;font-weight:normal;letter-spacing:-0.165px;-webkit-text-stroke:0.15px #222">Learning &amp; Skills</div>
<div class="a" style="left:492px;top:564.6px;width:59.5px;height:1.2px;background:#3a9a64;"></div>
<svg style="left:582px;top:556.8px" width="7" height="7" viewBox="0 0 7 7"><path d="M3.5 0 V7 M0 3.5 H7" stroke="#666" stroke-width="0.75"/></svg>
<div class="a" style="left:689.2px;top:557.5px;width:1.1px;height:1.1px;background:#555;"></div>
<div class="a" style="left:689.2px;top:559.7px;width:1.1px;height:1.1px;background:#555;"></div>
<div class="a" style="left:689.2px;top:561.9px;width:1.1px;height:1.1px;background:#555;"></div>
<div class="a" style="left:698.5px;top:555px;width:90px;height:11px;background:#f0f0f0;border-radius:5.5px"></div>
<svg style="left:701.5px;top:557.8px" width="4" height="5" viewBox="0 0 4 5"><path d="M4 0 L4 5 L0 2.5 Z" fill="#555"/></svg>
<div class="a" style="left:708px;top:558px;width:68.5px;height:4.6px;background:#6e6e6e;border-radius:2.3px"></div>
<svg style="left:781.5px;top:557.8px" width="4" height="5" viewBox="0 0 4 5"><path d="M0 0 L0 5 L4 2.5 Z" fill="#555"/></svg>
<div class="t" style="left:7px;top:573.2px;font-size:6.1px;color:#4a4a4a;text-align:left;font-weight:normal;letter-spacing:-0.3px">Ready</div>
<svg style="left:34px;top:572.3px" width="9" height="7.6" viewBox="0 0 9 7.6"><rect x="0.4" y="0.4" width="8.2" height="6.8" rx="0.6" fill="none" stroke="#555" stroke-width="0.8"/><rect x="0.4" y="0.4" width="8.2" height="1.8" fill="#555"/><path d="M0.4 3.8 H3.2 V7.2" fill="none" stroke="#555" stroke-width="0.6"/><circle cx="5.9" cy="5.1" r="1.9" fill="#555"/><path d="M5.3 4.2 L6.9 5.1 L5.3 6 Z" fill="#f3f3f3"/></svg>
<div class="a" style="left:648.3px;top:569.2px;width:21.7px;height:12.3px;background:#dedede;"></div>
<svg style="left:655px;top:571.5px" width="8" height="7.5" viewBox="0 0 8 7.5"><rect x="0.4" y="0.4" width="7.2" height="6.7" fill="none" stroke="#555" stroke-width="0.8"/><path d="M0.4 2.6 H7.6 M0.4 4.8 H7.6 M2.8 0.4 V7.1 M5.2 0.4 V7.1" stroke="#555" stroke-width="0.6"/></svg>
<svg style="left:678px;top:571.5px" width="8" height="7.5" viewBox="0 0 8 7.5"><rect x="0.4" y="0.4" width="7.2" height="6.7" fill="none" stroke="#555" stroke-width="0.8"/><rect x="2" y="1.8" width="4" height="3.9" fill="none" stroke="#555" stroke-width="0.7"/></svg>
<svg style="left:700.5px;top:571.8px" width="8" height="7.5" viewBox="0 0 8 7.5"><path d="M0.4 0.4 H7.6 V7.1 H0.4 Z M2.8 0.4 V4.2 H5.4 V0.4" fill="none" stroke="#555" stroke-width="0.8"/></svg>
<div class="a" style="left:718.8px;top:575.4px;width:3.8px;height:0.9px;background:#888;"></div>
<div class="a" style="left:726.5px;top:575.3px;width:56px;height:1.2px;background:#a0a0a0;"></div>
<div class="a" style="left:752.5px;top:572.5px;width:3.2px;height:6.5px;background:#555;border-radius:0.6px"></div>
<svg style="left:784.5px;top:573.5px" width="5" height="5" viewBox="0 0 5 5"><path d="M2.5 0 V5 M0 2.5 H5" stroke="#888" stroke-width="0.7"/></svg>
</body></html>
